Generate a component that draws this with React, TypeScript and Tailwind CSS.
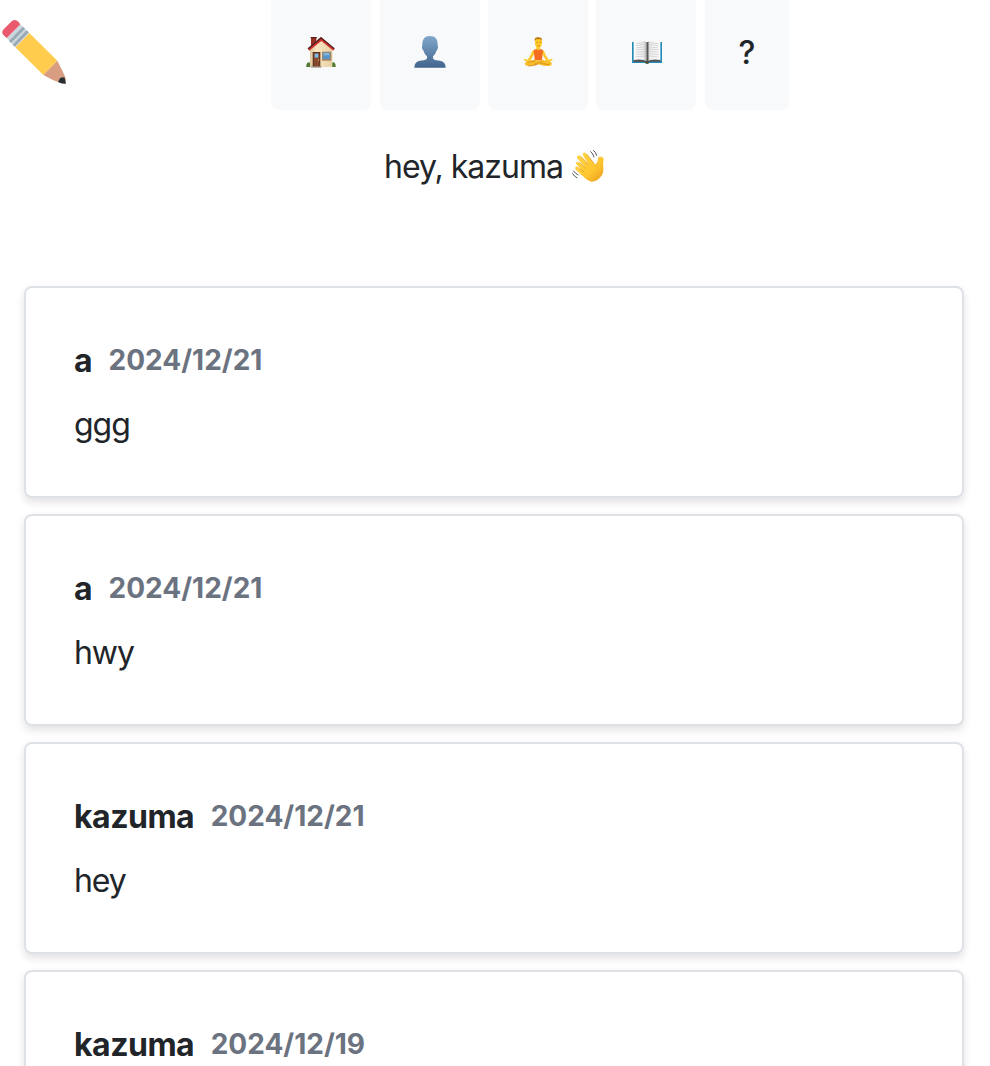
import type { ReactNode } from "react";

function Pencil() {
  return (
    <svg viewBox="0 0 240 252" className="h-[84px] w-[80px]" aria-label="Pencil">
      <path d="M88 69L172 152L130 195L46 112Z" fill="#ffcc4d" />
      <path d="M172 152Q187 180 197 204Q200 222 184 220Q155 210 130 195Z" fill="#d99e82" />
      <path d="M180 205Q187 199 194 203L198 221Q184 222 174 216Z" fill="#292f33" />
      <path d="M61 43L88 69L46 112L20 84Z" fill="#ccd6dd" />
      <path d="M69 50L75 56L33 99L27 93ZM80 61L86 67L44 110L38 104Z" fill="#99aab5" />
      <path d="M61 43L20 84L10 75Q3 66 11 58L35 34Q45 26 55 35Z" fill="#ea596e" />
    </svg>
  );
}

function House() {
  return (
    <svg viewBox="0 0 156 144" className="h-12 w-[52px]" aria-label="Home">
      <defs>
        <linearGradient id="wall" x2="1" y2="0">
          <stop stopColor="#dcc59d" />
          <stop offset=".3" stopColor="#fae7c1" />
          <stop offset="1" stopColor="#e5cfa5" />
        </linearGradient>
      </defs>
      <path d="M48 28H64V48L48 59Z" fill="#973126" />
      <path d="M47 27H65V31H47Z" fill="#612019" />
      <path d="M34 111Q35 103 42 103L53 108V117H34ZM108 108Q111 101 119 104Q123 109 122 117H108Z" fill="#527a32" />
      <path d="M45 62L79 34L112 62V117H45Z" fill="url(#wall)" />
      <path d="M38 62L78 27L119 62L115 68L79 39L43 68Z" fill="#d4332e" />
      <path d="M38 61L78 27L119 61L117 64L78 32L41 64Z" fill="#4a2424" />
      <path d="M53 72H76V117H53Z" fill="#59301f" />
      <path d="M56 75H73V115H56Z" fill="#87472c" />
      <path d="M59 77H70V89H59Z" fill="#78bde8" />
      <circle cx="70" cy="96" r="2" fill="#e9c05a" />
      <path d="M81 71H109V98H81Z" fill="#a58366" />
      <path d="M84 74H105V93H84Z" fill="#5994c9" />
      <path d="M86 75H103V82H86Z" fill="#80b5df" />
      <path d="M48 115H80V119H48Z" fill="#a69b90" />
    </svg>
  );
}

function Profile() {
  return (
    <svg viewBox="0 0 156 144" className="h-12 w-[52px]" aria-label="Profile">
      <defs>
        <linearGradient id="person" x2="0" y2="1">
          <stop stopColor="#7fa7cb" />
          <stop offset="1" stopColor="#42658d" />
        </linearGradient>
      </defs>
      <path d="M78 24C62 24 54 34 55 52C52 57 55 66 59 69C61 77 65 81 69 85V90C68 96 58 97 48 98Q31 101 31 119H125Q125 101 108 98C98 97 88 96 87 90V85C91 81 95 77 97 69C101 66 104 57 101 52C102 34 94 24 78 24Z" fill="url(#person)" />
    </svg>
  );
}

function Lotus() {
  return (
    <svg viewBox="0 0 156 144" className="h-12 w-[52px]" aria-label="Meditation">
      <path d="M73 53H84V64L94 67Q98 70 100 79L110 95L120 92L122 96L112 102L103 99L91 79H66L55 99L46 102L35 96L37 92L47 95L57 79Q59 70 64 67L73 64Z" fill="#ffc82c" />
      <path d="M69 38Q69 29 79 29Q90 30 90 39V47Q87 60 79 61Q71 59 69 48Z" fill="#ffca28" />
      <path d="M68 39Q66 27 79 28Q92 28 90 39L87 34H72Z" fill="#b9770f" />
      <path d="M73 43H77M82 43H86" stroke="#9a6818" strokeWidth="2" />
      <path d="M76 53Q79 55 83 53" stroke="#a9641c" strokeWidth="2" fill="none" />
      <path d="M65 66L73 63Q79 71 85 63L93 66L90 95Q79 99 68 95Z" fill="#f56d20" />
      <path d="M66 95L43 101Q34 107 43 113Q60 117 79 109Q98 117 115 113Q124 107 115 101L91 95Q79 99 66 95Z" fill="#f9bd2a" />
      <path d="M46 103Q61 100 70 99M66 109L92 100M85 106L111 110M48 114Q62 114 77 109" stroke="#c98318" strokeWidth="2" fill="none" />
    </svg>
  );
}

function Book() {
  return (
    <svg viewBox="0 0 156 144" className="h-12 w-[52px]" aria-label="Journal">
      <defs>
        <linearGradient id="pages">
          <stop stopColor="#fff" />
          <stop offset=".36" stopColor="#eeeeee" />
          <stop offset=".49" stopColor="#aaa" />
          <stop offset=".52" stopColor="#555" />
          <stop offset=".6" stopColor="#eee" />
          <stop offset="1" stopColor="#fff" />
        </linearGradient>
      </defs>
      <path d="M36 42H44V97H118V42H126V105H88Q81 109 74 105H36Z" fill="#258bb7" />
      <path d="M41 40Q66 34 81 43Q96 34 121 40V98Q94 95 82 101Q66 94 41 98Z" fill="url(#pages)" />
      <path d="M41 96Q67 92 81 100Q95 92 121 96V101H88Q81 107 75 102H41Z" fill="#555" />
      <path d="M81 42V101" stroke="#555" strokeWidth="2" />
      <path d="M47 47L73 44M47 53L73 50M47 60L73 57M47 66L73 63M47 73L73 70M47 80L73 77M47 87L73 84M89 44L116 47M89 50L116 53M89 57L116 60M89 63L116 66M89 70L116 73M89 77L116 80M89 84L116 87" stroke="#c5c5c5" strokeWidth="2" />
      <path d="M76 101H87V105Q81 109 76 105Z" fill="#514722" />
    </svg>
  );
}

function Wave() {
  return (
    <svg viewBox="0 0 168 156" className="h-[52px] w-[56px]" aria-label="Waving hand">
      <defs>
        <linearGradient id="hand" x2="1" y2="1">
          <stop stopColor="#ffd64e" />
          <stop offset=".6" stopColor="#ffc62f" />
          <stop offset="1" stopColor="#e99b20" />
        </linearGradient>
      </defs>
      <path d="M51 75Q45 69 50 66Q54 63 59 68L77 85L54 58Q48 51 53 47Q59 44 64 50L84 73L69 46Q66 39 71 38Q76 36 81 43L104 72Q111 75 112 66L114 55Q117 47 126 51Q132 53 131 60Q128 68 130 81Q132 102 121 112Q109 126 94 125Q83 124 69 109L49 91Q43 84 47 81Q51 77 58 84L67 91Z" fill="url(#hand)" />
      <path d="M59 68L79 87M64 50L86 76M81 43L103 72M58 84L73 97" stroke="#db981f" strokeWidth="2" fill="none" />
      <path d="M112 66Q111 77 105 80" stroke="#e5a023" strokeWidth="2" fill="none" />
      <path d="M91 34Q100 41 102 52M100 31Q108 37 110 47M40 92Q45 100 55 105M37 100Q42 109 52 114" stroke="#555" strokeWidth="3" fill="none" />
    </svg>
  );
}

function NavButton({ children }: { children: ReactNode }) {
  return (
    <button className="flex h-[110px] w-[100px] justify-center rounded-b-lg bg-[#f8f9fa] pt-7">
      {children}
    </button>
  );
}

const posts = [
  { author: "a", date: "2024/12/21", body: "ggg" },
  { author: "a", date: "2024/12/21", body: "hwy" },
  { author: "kazuma", date: "2024/12/21", body: "hey" },
  { author: "kazuma", date: "2024/12/19", body: "" },
];

export default function App() {
  return (
    <div className="h-[1066px] overflow-hidden bg-white font-['Inter',sans-serif] text-[#212529]">
      <header className="flex h-[110px] items-start">
        <div className="w-[271.14px] shrink-0 pt-[10px]"><Pencil /></div>
        <nav className="flex gap-[8.43px]">
          <NavButton><House /></NavButton>
          <NavButton><Profile /></NavButton>
          <NavButton><Lotus /></NavButton>
          <NavButton><Book /></NavButton>
          <button className="flex h-[110px] w-[84px] justify-center rounded-b-lg bg-[#f8f9fa] pt-[29px] text-[32px] leading-[48px] font-medium">?</button>
        </nav>
      </header>
      <div className="flex h-[176px] items-start pt-[30px] pl-[384px]">
        <h1 className="w-[176px] pt-[3px] text-[32px] leading-[48px] font-normal tracking-[-1px] whitespace-nowrap">hey, kazuma</h1>
        <Wave />
      </div>
      <main className="flex flex-col gap-4 pr-[26px] pl-6">
        {posts.map((post, index) => (
          <article key={index} className="h-[212px] shrink-0 rounded-lg border-2 border-[#dee2e6] bg-white px-12 pt-[49px] shadow-[0_4px_8px_rgba(0,0,0,0.12)]">
            <div className="flex h-12 gap-[16.5px] font-bold">
              <h2 className="text-[32px] leading-[48px] tracking-[-0.5px]">{post.author}</h2>
              <time className="text-[28px] leading-[46px] text-[#6b7280]">{post.date}</time>
            </div>
            {post.body && (
              <p className="mt-4 text-[32px] leading-[48px] tracking-[-1.05px]">{post.body}</p>
            )}
          </article>
        ))}
      </main>
    </div>
  );
}
